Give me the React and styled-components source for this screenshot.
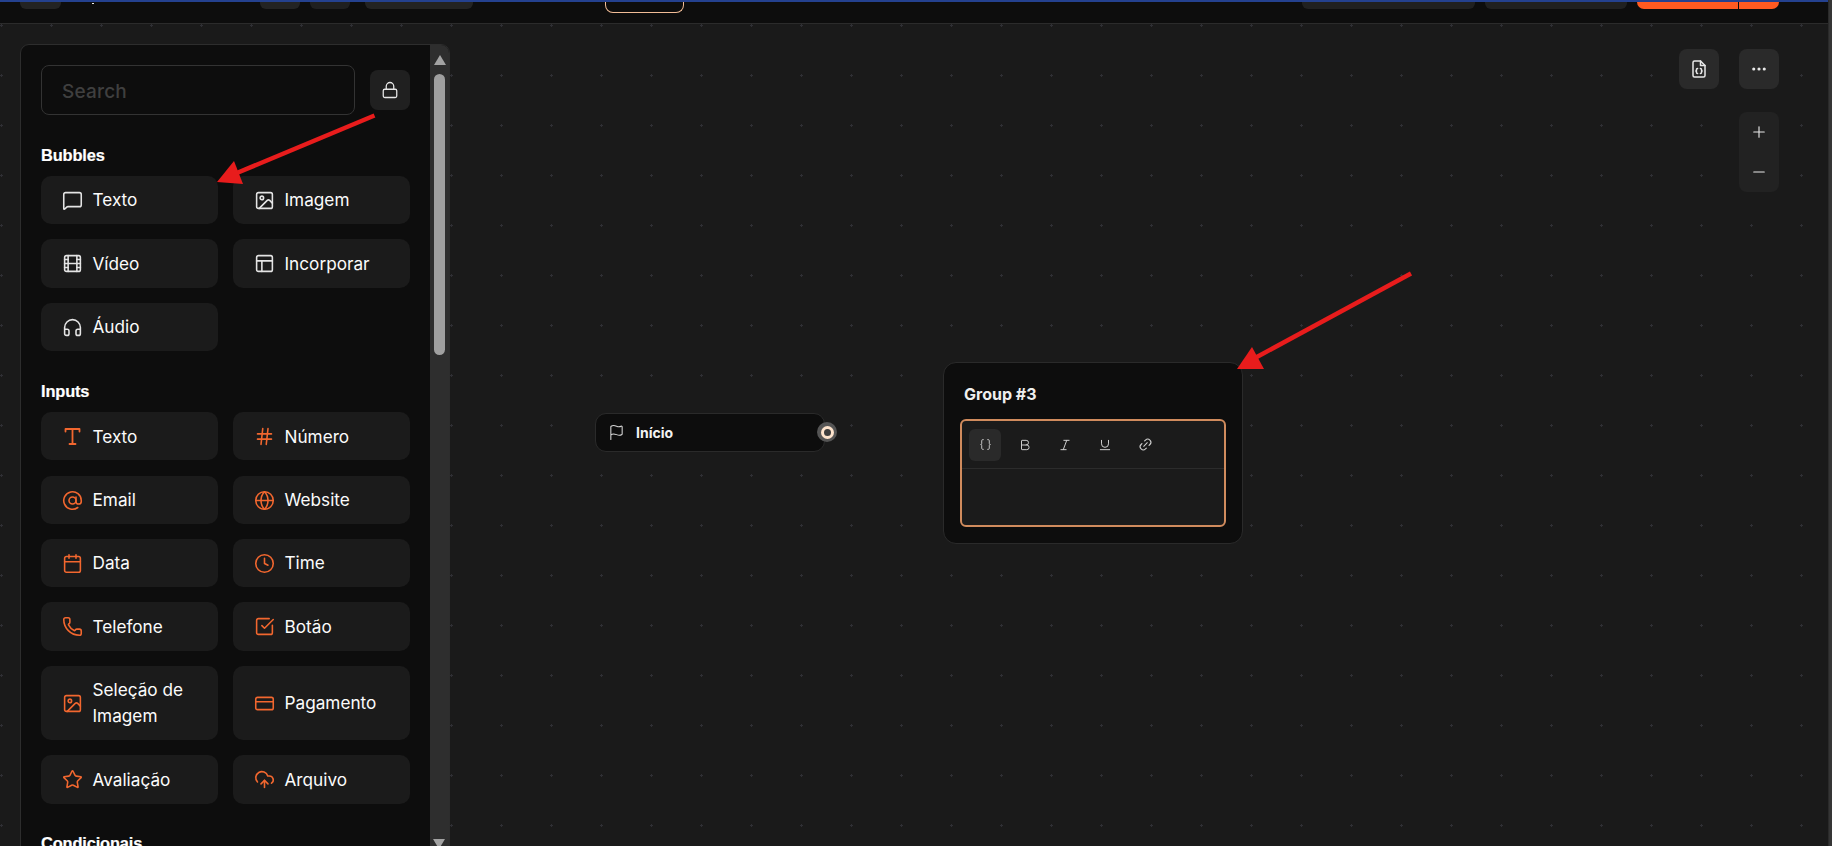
import React from "react";
import styled, { createGlobalStyle } from "styled-components";
import {
  MessageSquare, Image, Film, PanelsTopLeft, Headphones, Hash, AtSign, Globe, Calendar, Clock, Phone,
  SquareCheckBig, CreditCard, Star, CloudUpload, Lock, Flag, Bold, Italic, Underline, Link2, Braces,
  Plus, Minus, Ellipsis,
} from "lucide-react";

const Global = createGlobalStyle`
  html, body { margin: 0; padding: 0; background: #1a1a1a; overflow: hidden; }
  body { font-family: Inter, "Liberation Sans", sans-serif; }
  * { box-sizing: border-box; }
`;

const Page = styled.div`
  width: 1832px; height: 846px; display: flex; overflow: hidden; position: relative;
`;
const Main = styled.div`
  width: 1828px; height: 846px; display: flex; flex-direction: column;
`;
const WindowEdge = styled.div`
  width: 4px; height: 846px; background: #353535; border-left: 1px solid #2a2a2a;
`;
const TopLine = styled.div`height: 2px; background: #24418f; flex: none;`;
const Header = styled.header`
  height: 22px; flex: none; background: #0d0d0d; border-bottom: 1px solid #2b2b2b;
  display: flex; align-items: flex-start; padding-left: 20px;
`;
const Clip = styled.div`
  flex: none; height: ${p => p.$h || 7}px; width: ${p => p.$w}px; margin-left: ${p => p.$ml || 0}px;
  background: ${p => p.$bg || "#232323"}; border-radius: 0 0 6px 6px;
`;
const ClipOutline = styled(Clip)`
  background: transparent; border: 1px solid #f2bd97; border-top: 0; border-radius: 0 0 8px 8px;
`;
const OrangeBtn = styled(Clip)`
  background: linear-gradient(to right, #ff5a20 0 101px, #0d0d0d 101px 102px, #ff5a20 102px);
  border-radius: 0 0 10px 10px;
`;
const Tick = styled.span`
  flex: none; width: 2px; height: 1px; margin: 1px 0 0 31px; background: #eee;
`;

const Canvas = styled.div`
  flex: 1; min-height: 0; position: relative; overflow: hidden; padding: 20px 0 0 20px;
  background-color: #1a1a1a;
  background-image: radial-gradient(circle at 1.5px 1.5px, #2f2f34 0 1.1px, transparent 1.3px);
  background-size: 50px 50px; background-position: 0 0;
`;

const Sidebar = styled.aside`
  width: 430px; height: 830px; display: flex; background: #0d0d0d; border: 1px solid #2d2d2d;
  border-radius: 9px 9px 0 0; overflow: hidden;
`;
const SideContent = styled.div`
  width: 409px; flex: none; padding: 20px 20px 0 20px;
`;
const SearchRow = styled.div`display: flex; align-items: center; gap: 15px;`;
const SearchBox = styled.div`
  width: 314px; height: 50px; border: 1px solid #333; border-radius: 8px; padding: 2px 20px 0;
  display: flex; align-items: center; color: #3f3f3f; font-size: 19px; font-weight: 500; letter-spacing: .2px;
`;
const LockBtn = styled.div`
  width: 40px; height: 40px; background: #202020; border-radius: 8px; display: flex;
  align-items: center; justify-content: center; color: #e6e6e6;
`;
const SectionTitle = styled.h3`
  margin: ${p => p.$mt}px 0 0; height: 19px; line-height: 19px; color: #fff; font-size: 16.4px; font-weight: 600;
  font-family: "Liberation Sans", Arial, sans-serif; letter-spacing: -.15px; -webkit-text-stroke: .2px #fff;
`;
const Grid = styled.div`
  display: grid; grid-template-columns: 177px 177px; column-gap: 15px; row-gap: 15.2px; margin-top: 11px;
`;
const Tile = styled.div`
  padding: 11.4px 10px 10.6px 20.5px; background: #1b1b1b; border-radius: 10px;
  display: flex; align-items: center; gap: 10px; font-size: 17.2px; line-height: 26.2px; color: #fbfbfb; font-weight: 400;
  svg { flex: none; color: ${p => p.$accent ? "#f2672f" : "#e4e4e4"}; }
`;
const TileLabel = styled.span`display: block;`;

const Scrollbar = styled.div`
  flex: 1; background: #2e2e2e; position: relative; display: flex; flex-direction: column; align-items: center; padding-top: 10px;
`;
const ArrowUp = styled.div`
  width: 0; height: 0; border: 6.5px solid transparent; border-top: 0; border-bottom: 10px solid #a3a3a3;
`;
const Thumb = styled.div`
  width: 11px; height: 281px; margin-top: 9px; background: #a0a0a0; border-radius: 6px;
`;
const ArrowDown = styled.div`
  position: absolute; top: 794px; left: 3px; width: 0; height: 0; border: 6.5px solid transparent;
  border-bottom: 0; border-top: 10px solid #a3a3a3;
`;

const StartNode = styled.div`
  position: absolute; left: 595px; top: 389px; width: 230px; height: 39px; background: #0d0d0d; border: 1px solid #2a2a2a;
  border-radius: 11px; display: flex; align-items: center; padding-left: 12px; gap: 11px; color: #f2f2f2;
  font-size: 14px; font-weight: 700; svg { color: #d6d6d6; flex: none; }
`;
const Port = styled.div`
  position: absolute; left: 817px; top: 398px; width: 20px; height: 20px; border-radius: 50%; background: #555;
  display: flex; align-items: center; justify-content: center;
`;
const PortRing = styled.div`
  width: 13px; height: 13px; border-radius: 50%; background: #3d3d3d; border: 3px solid #fde3cc;
`;
const GroupNode = styled.div`
  position: absolute; left: 943px; top: 338px; width: 300px; height: 182px; background: #0d0d0d; border: 1px solid #2a2a2a;
  border-radius: 13px; padding: 21px 16px 0 16px;
`;
const GroupTitle = styled.div`
  color: #efefef; font-size: 16px; font-weight: 700; line-height: 20px; height: 35px; padding-left: 4px;
`;
const Editor = styled.div`
  width: 266px; height: 108px; background: #1b1b1b; border: 2px solid #d08b5d; border-radius: 6px;
`;
const EditorBar = styled.div`
  height: 48px; border-bottom: 1px solid #2c2c2c; display: flex; align-items: center; padding-left: 7px; gap: 8px;
`;
const EditorBtn = styled.div`
  width: 32px; height: 32px; border-radius: 6px; background: ${p => p.$active ? "#2a2a2a" : "transparent"};
  display: flex; align-items: center; justify-content: center; color: #cfcfcf;
`;

const ToolColumn = styled.div`
  position: absolute; top: 25px; right: 49px; display: flex; flex-direction: column; align-items: flex-end; gap: 23px;
`;
const ToolRow = styled.div`display: flex; gap: 20px;`;
const ToolBtn = styled.div`
  width: 40px; height: 40px; border-radius: 8px; background: #2a2a2a; color: #e8e8e8;
  display: flex; align-items: center; justify-content: center;
`;
const ZoomBox = styled.div`
  width: 40px; height: 80px; border-radius: 8px; background: #222; color: #e8e8e8;
  display: flex; flex-direction: column; align-items: center; justify-content: space-around;
`;
const Annotations = styled.svg`
  position: absolute; left: 0; top: 0; width: 1832px; height: 846px; pointer-events: none;
`;

const SerifT = ({ size = 21 }) => (
  <svg width={size} height={size} viewBox="0 0 21 21" fill="none" stroke="currentColor" strokeWidth="1.8" strokeLinecap="round" strokeLinejoin="round">
    <path d="M3.5 5.5V3h14v2.5M10.5 3V18M7.5 18h6" />
  </svg>
);

const FileCode = () => (
  <svg width="20" height="20" viewBox="0 0 20 20" fill="none" stroke="currentColor" strokeWidth="1.5" strokeLinecap="round" strokeLinejoin="round">
    <path d="M11.5 2H5.5A1.5 1.5 0 0 0 4 3.5v13A1.5 1.5 0 0 0 5.5 18h9a1.5 1.5 0 0 0 1.5-1.5V6.5Z" />
    <path d="M11.5 2v4.5H16" />
    <path d="M8.6 9.5c-.9 0-1.1.4-1.1 1v.8c0 .4-.3.7-.7.7.4 0 .7.3.7.7v.8c0 .6.2 1 1.1 1M11.4 9.5c.9 0 1.1.4 1.1 1v.8c0 .4.3.7.7.7-.4 0-.7.3-.7.7v.8c0 .6-.2 1-1.1 1" />
  </svg>
);

const bubbles = [
  [MessageSquare, "Texto"], [Image, "Imagem"], [Film, "Vídeo"], [PanelsTopLeft, "Incorporar"], [Headphones, "Áudio"],
];
const inputs = [
  [SerifT, "Texto"], [Hash, "Número"], [AtSign, "Email"], [Globe, "Website"], [Calendar, "Data"], [Clock, "Time"],
  [Phone, "Telefone"], [SquareCheckBig, "Botão"], [Image, "Seleção de Imagem"], [CreditCard, "Pagamento"],
  [Star, "Avaliação"], [CloudUpload, "Arquivo"],
];

const Item = ({ icon: Icon, label, accent }) => (
  <Tile $accent={accent}>
    <Icon size={21} strokeWidth={1.8} />
    <TileLabel>{label}</TileLabel>
  </Tile>
);

export default function App() {
  return (
    <Page>
      <Global />
      <Main>
        <TopLine />
        <Header>
          <Clip $w={41} />
          <Tick />
          <Clip $w={40} $ml={166} />
          <Clip $w={40} $ml={10} $bg="#1f1f1f" />
          <Clip $w={108} $ml={15} />
          <ClipOutline $w={79} $h={11} $ml={132} />
          <Clip $w={173} $ml={618} $bg="#202020" />
          <Clip $w={142} $ml={10} $bg="#202020" />
          <OrangeBtn $w={142} $ml={10} />
        </Header>
        <Canvas>
          <Sidebar>
            <SideContent>
              <SearchRow>
                <SearchBox>Search</SearchBox>
                <LockBtn><Lock size={18} strokeWidth={1.7} /></LockBtn>
              </SearchRow>
              <SectionTitle $mt={31}>Bubbles</SectionTitle>
              <Grid>{bubbles.map(([i, l]) => <Item key={l} icon={i} label={l} />)}</Grid>
              <SectionTitle $mt={31.3}>Inputs</SectionTitle>
              <Grid>{inputs.map(([i, l]) => <Item key={l} icon={i} label={l} accent />)}</Grid>
              <SectionTitle $mt={30}>Condicionais</SectionTitle>
            </SideContent>
            <Scrollbar>
              <ArrowUp />
              <Thumb />
              <ArrowDown />
            </Scrollbar>
          </Sidebar>

          <StartNode><Flag size={17} strokeWidth={1.5} />Início</StartNode>
          <Port><PortRing /></Port>

          <GroupNode>
            <GroupTitle>Group #3</GroupTitle>
            <Editor>
              <EditorBar>
                <EditorBtn $active><Braces size={13} strokeWidth={1.7} /></EditorBtn>
                <EditorBtn><Bold size={14} strokeWidth={1.7} /></EditorBtn>
                <EditorBtn><Italic size={14} strokeWidth={1.7} /></EditorBtn>
                <EditorBtn><Underline size={14} strokeWidth={1.7} /></EditorBtn>
                <EditorBtn><Link2 size={15} strokeWidth={1.7} style={{ transform: "rotate(-45deg)" }} /></EditorBtn>
              </EditorBar>
            </Editor>
          </GroupNode>

          <ToolColumn>
            <ToolRow>
              <ToolBtn><FileCode /></ToolBtn>
              <ToolBtn><Ellipsis size={18} strokeWidth={2.2} /></ToolBtn>
            </ToolRow>
            <ZoomBox>
              <Plus size={18} strokeWidth={1.5} />
              <Minus size={18} strokeWidth={1.5} />
            </ZoomBox>
          </ToolColumn>
        </Canvas>
      </Main>
      <WindowEdge />
      <Annotations viewBox="0 0 1832 846">
        <path d="M374.5 115.5 L232 175" stroke="#e81c1c" strokeWidth="4.5" fill="none" />
        <path d="M234 161 L243 184 L217 182 Z" fill="#e81c1c" />
        <path d="M1411 273.5 L1255 358" stroke="#e81c1c" strokeWidth="4.5" fill="none" />
        <path d="M1252 347 L1264 369 L1237 369 Z" fill="#e81c1c" />
      </Annotations>
    </Page>
  );
}
